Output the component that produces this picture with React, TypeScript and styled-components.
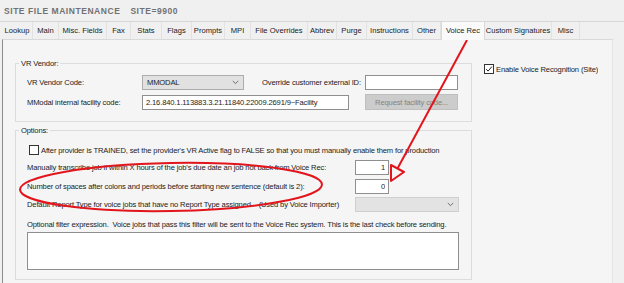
import React from 'react';
import styled, { createGlobalStyle } from 'styled-components';

const GlobalStyle = createGlobalStyle`
  html, body {
    margin: 0;
    padding: 0;
    background: #f0f0f0;
  }
  body {
    font-family: "Liberation Sans", Arial, sans-serif;
    font-size: 7.6px;
    color: #1b1b1b;
  }
`;

const Screen = styled.div`
  position: relative;
  width: 624px;
  height: 283px;
  overflow: hidden;
  background: #f0f0f0;
`;

const Title = styled.div`
  height: 21px;
  padding-left: 4px;
  display: flex;
  align-items: center;
  gap: 10px;
  font-size: 8.5px;
  font-weight: bold;
  letter-spacing: 0.55px;
  color: #727272;
`;

const TabStrip = styled.div`
  display: flex;
  align-items: flex-end;
  height: 17px;
  padding-left: 2px;
  border-top: 1px solid #d6d6d6;
`;

const Tab = styled.div<{ $w: number; $active?: boolean }>`
  width: ${p => p.$w}px;
  height: ${p => (p.$active ? 19 : 17)}px;
  box-sizing: border-box;
  display: flex;
  align-items: center;
  justify-content: center;
  white-space: nowrap;
  position: relative;
  z-index: ${p => (p.$active ? 2 : 0)};
  margin-bottom: ${p => (p.$active ? -1 : 0)}px;
  padding-bottom: ${p => (p.$active ? 2 : 0)}px;
  background: ${p => (p.$active ? '#fafafa' : 'transparent')};
  border-right: 1px solid ${p => (p.$active ? '#d9d9d9' : '#e2e2e2')};
  border-left: ${p => (p.$active ? '1px solid #d9d9d9' : 'none')};
  border-top: ${p => (p.$active ? '1px solid #d9d9d9' : 'none')};
`;

const Panel = styled.div`
  margin-left: 2px;
  width: 611px;
  height: 260px;
  box-sizing: border-box;
  border-top: 1px solid #d9d9d9;
  border-right: 1px solid #e4e4e4;
  border-left: 1px solid #8c8c8c;
  background: #f5f5f5;
  display: flex;
  align-items: flex-start;
  padding: 19px 0 0 12px;
  letter-spacing: -0.15px;
`;

const LeftCol = styled.div`
  width: 457px;
  display: flex;
  flex-direction: column;
`;

const RightCol = styled.div`
  margin-left: 12px;
  padding-top: 4px;
`;

const Group = styled.fieldset<{ $mt?: number; $pb: number }>`
  margin: ${p => p.$mt ?? 0}px 0 0 0;
  padding: 0 0 ${p => p.$pb}px 11px;
  border: 1px solid #dcdcdc;
  min-width: 0;
  flex: none;
`;

const Legend = styled.legend`
  margin-left: -8px;
  padding: 0 2px;
  line-height: 9px;
  color: #1b1b1b;
`;

const Row = styled.div<{ $h?: number; $mt?: number }>`
  display: flex;
  align-items: center;
  height: ${p => p.$h ?? 16}px;
  margin-top: ${p => p.$mt ?? 0}px;
  white-space: nowrap;
`;

const Label = styled.span<{ $w?: number; $ml?: number }>`
  flex: ${p => (p.$w ? 'none' : '1')};
  width: ${p => (p.$w ? `${p.$w}px` : 'auto')};
  margin-left: ${p => p.$ml ?? 0}px;
  overflow: hidden;
`;

const TextBox = styled.input<{ $w: number; $right?: boolean; $ml?: number; $mr?: number }>`
  width: ${p => p.$w}px;
  height: 15px;
  box-sizing: border-box;
  margin: 0 ${p => p.$mr ?? 0}px 0 ${p => p.$ml ?? 0}px;
  padding: 0 3px;
  border: 1px solid #8f8f8f;
  background: #ffffff;
  font: inherit;
  letter-spacing: inherit;
  color: #1b1b1b;
  text-align: ${p => (p.$right ? 'right' : 'left')};
  outline: none;
`;

const Combo = styled.div<{ $w: number; $disabled?: boolean; $mr?: number }>`
  width: ${p => p.$w}px;
  height: 15px;
  box-sizing: border-box;
  margin-right: ${p => p.$mr ?? 0}px;
  display: flex;
  align-items: center;
  justify-content: space-between;
  padding: 0 4px;
  border: 1px solid ${p => (p.$disabled ? '#cfcfcf' : '#adadad')};
  background: ${p => (p.$disabled ? '#e3e3e3' : '#e1e1e1')};
  color: #1b1b1b;
`;

const Button = styled.div<{ $w: number; $ml?: number }>`
  width: ${p => p.$w}px;
  height: 16px;
  box-sizing: border-box;
  margin-left: ${p => p.$ml ?? 0}px;
  display: flex;
  align-items: center;
  justify-content: center;
  border: 1px solid #bfbfbf;
  background: #cccccc;
  color: #838383;
`;

const CheckBox = styled.span<{ $ml?: number }>`
  width: 10px;
  height: 10px;
  box-sizing: border-box;
  margin-left: ${p => p.$ml ?? 0}px;
  margin-right: 2px;
  flex: none;
  border: 1px solid #333333;
  background: #ffffff;
  display: flex;
  align-items: center;
  justify-content: center;
`;

const FilterBox = styled.textarea`
  display: block;
  width: 432px;
  height: 38px;
  box-sizing: border-box;
  margin: 2px 0 0 0;
  padding: 0;
  border: 1px solid #8f8f8f;
  background: #ffffff;
  resize: none;
  font: inherit;
  outline: none;
`;

const Overlay = styled.svg`
  position: absolute;
  left: 0;
  top: 0;
  pointer-events: none;
`;

const Chevron = () => (
  <svg width="7" height="5" viewBox="0 0 7 5">
    <path d="M0.8 1 L3.5 3.6 L6.2 1" fill="none" stroke="#606060" strokeWidth="0.9" />
  </svg>
);

const Check = ({ checked }: { checked?: boolean }) =>
  checked ? (
    <svg width="8" height="8" viewBox="0 0 8 8">
      <path d="M1.2 4.2 L3.1 6.1 L6.9 1.6" fill="none" stroke="#222" strokeWidth="1" />
    </svg>
  ) : null;

const tabs: [string, number][] = [
  ['Lookup', 31],
  ['Main', 26],
  ['Misc. Fields', 48],
  ['Fax', 24],
  ['Stats', 31],
  ['Flags', 30],
  ['Prompts', 33],
  ['MPI', 26],
  ['File Overrides', 57],
  ['Abbrev', 29],
  ['Purge', 30],
  ['Instructions', 46],
  ['Other', 28],
  ['Voice Rec', 44],
  ['Custom Signatures', 67],
  ['Misc', 28],
];

export default function App() {
  return (
    <Screen>
      <GlobalStyle />
      <Title>
        <span>SITE FILE MAINTENANCE</span>
        <span>SITE=9900</span>
      </Title>
      <TabStrip>
        {tabs.map(([name, w]) => (
          <Tab key={name} $w={w} $active={name === 'Voice Rec'}>
            {name}
          </Tab>
        ))}
      </TabStrip>
      <Panel>
        <LeftCol>
          <Group $pb={11}>
            <Legend>VR Vendor:</Legend>
            <Row $mt={6}>
              <Label $w={115}>VR Vendor Code:</Label>
              <Combo $w={102}>
                <span>MMODAL</span>
                <Chevron />
              </Combo>
              <Label $w={103} $ml={18}>Override customer external ID:</Label>
              <TextBox $w={93} readOnly defaultValue="" />
            </Row>
            <Row $mt={4}>
              <Label $w={115}>MModal internal facility code:</Label>
              <TextBox $w={207} readOnly defaultValue="2.16.840.1.113883.3.21.11840.22009.2691/9~Facility" />
              <Button $w={93} $ml={16}>Request facility code...</Button>
            </Row>
          </Group>
          <Group $mt={4} $pb={9}>
            <Legend>Options:</Legend>
            <Row $h={12} $mt={9}>
              <CheckBox $ml={2}>
                <Check />
              </CheckBox>
              <Label>
                After provider is TRAINED, set the provider's VR Active flag to FALSE so that you must manually enable them for production
              </Label>
            </Row>
            <Row $mt={3}>
              <Label>Manually transcribe job if within X hours of the job's due date an job not back from Voice Rec:</Label>
              <TextBox $w={34} $right $mr={82} readOnly defaultValue="1" />
            </Row>
            <Row $mt={3}>
              <Label>Number of spaces after colons and periods before starting new sentence (default is 2):</Label>
              <TextBox $w={34} $right $mr={82} readOnly defaultValue="0" />
            </Row>
            <Row $mt={2}>
              <Label>Default Report Type for voice jobs that have no Report Type assigned&nbsp;&nbsp;&nbsp;&nbsp;(Used by Voice Importer)</Label>
              <Combo $w={104} $mr={12} $disabled>
                <span />
                <Chevron />
              </Combo>
            </Row>
            <Row $h={12} $mt={6}>
              <Label>
                Optional filter expression.&nbsp; Voice jobs that pass this filter will be sent to the Voice Rec system. This is the last check before sending.
              </Label>
            </Row>
            <FilterBox readOnly defaultValue="" />
          </Group>
        </LeftCol>
        <RightCol>
          <Row $h={12}>
            <CheckBox>
              <Check checked />
            </CheckBox>
            <Label>Enable Voice Recognition (Site)</Label>
          </Row>
        </RightCol>
      </Panel>
      <Overlay width="624" height="283" viewBox="0 0 624 283">
        <ellipse cx="171" cy="187" rx="151" ry="24" fill="none" stroke="#e3151c" strokeWidth="2" transform="rotate(-1 171 187)" />
        <line x1="467" y1="40" x2="397.5" y2="168.5" stroke="#e3151c" strokeWidth="2" />
        <polygon points="391,165 404,172 391,181" fill="none" stroke="#e3151c" strokeWidth="2" strokeLinejoin="round" />
      </Overlay>
    </Screen>
  );
}
